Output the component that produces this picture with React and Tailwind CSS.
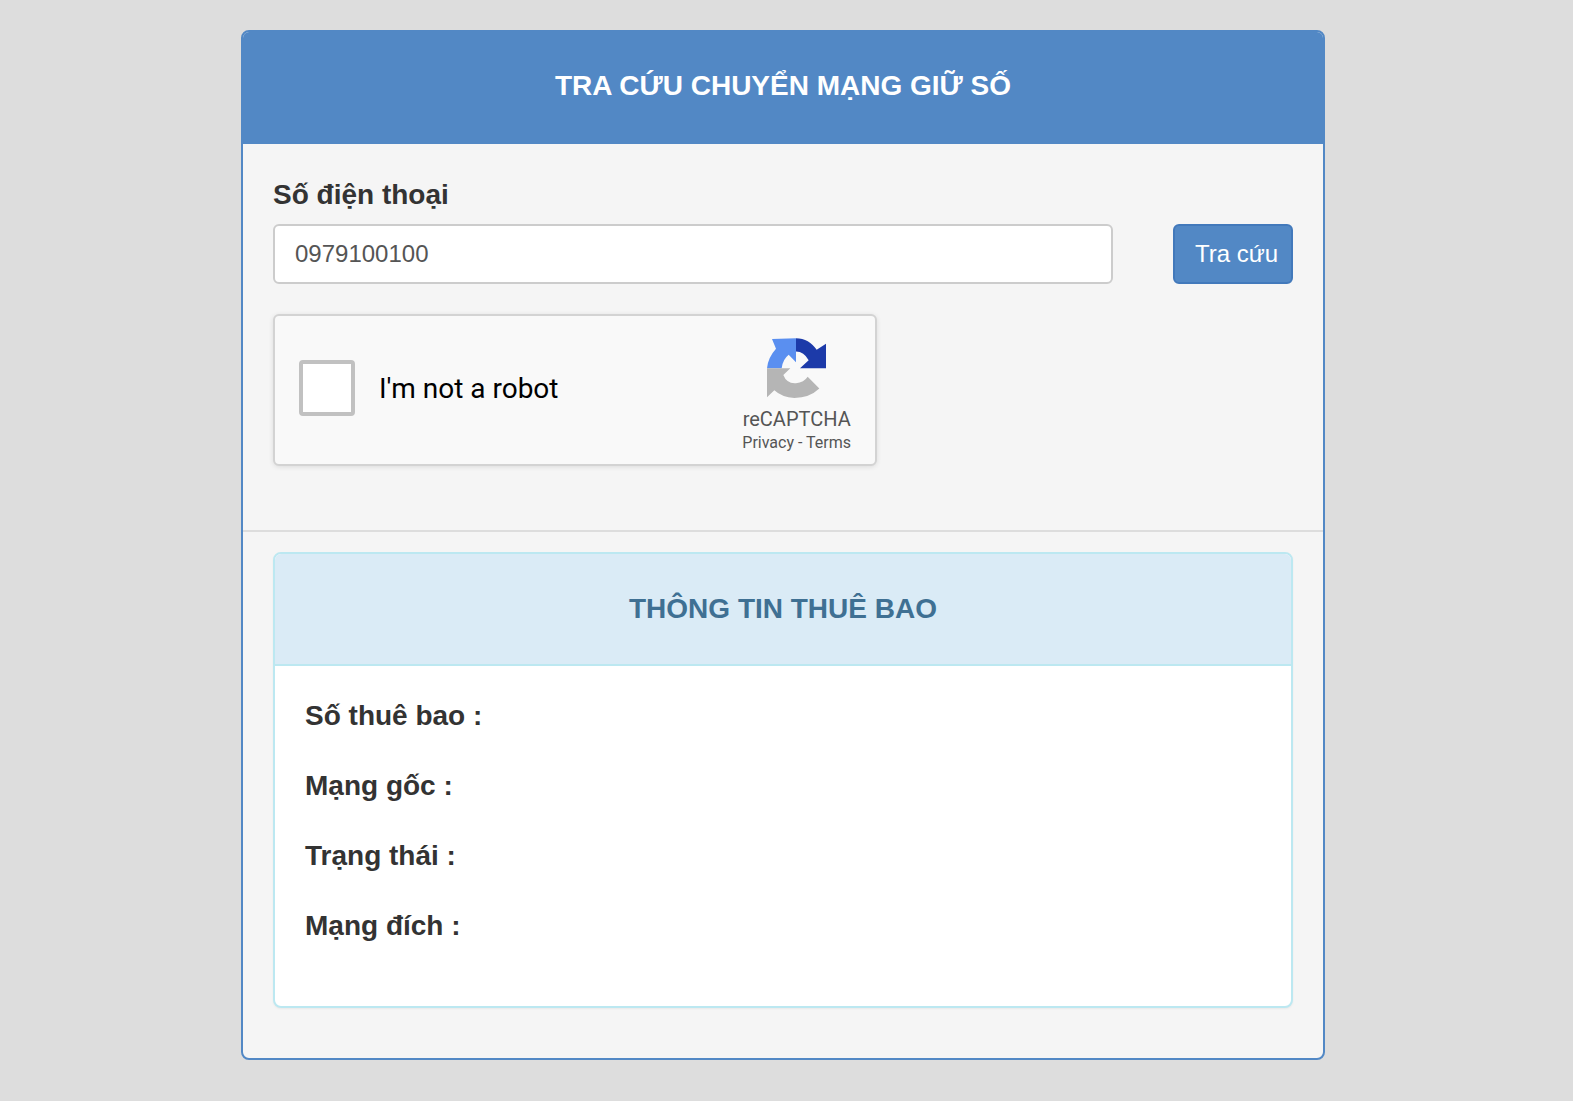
import React from "react";

const rows = ["Số thuê bao :", "Mạng gốc :", "Trạng thái :", "Mạng đích :"];

function RecaptchaLogo() {
  return (
    <svg
      viewBox="113 40 177 178"
      preserveAspectRatio="none"
      className="w-[59px] h-[60px]"
    >
      <path
        d="M200 41C226 41 248 54 262 75L290 57V130H212L238 106Q224 80 200 80Z"
        fill="#1c3aa9"
      />
      <path
        d="M113 130Q116 98 140 72L128 43L200 41V112L178 90Q160 104 157 130Z"
        fill="#5a8ff0"
      />
      <path
        d="M113 130H183L162 150Q172 176 200 174Q224 172 235 155L270 190Q240 218 195 218Q158 216 135 195L113 216Z"
        fill="#b5b5b5"
      />
    </svg>
  );
}

export default function App() {
  return (
    <div className="min-h-screen bg-[#dddddd] pt-[30px] pb-[41px] font-['Liberation_Sans',Arial,sans-serif] text-[#333333]">
      <div className="ml-[241px] w-[1084px] rounded-[8px] border-2 border-[#5288c5] bg-[#f5f5f5] overflow-hidden">
        {/* Header */}
        <div className="h-[112px] pb-[4px] bg-[#5288c5] flex items-center justify-center">
          <h1 className="text-[28px] font-bold text-white">
            TRA CỨU CHUYỂN MẠNG GIỮ SỐ
          </h1>
        </div>

        {/* Form */}
        <div className="px-[30px] pt-[31px] pb-[64px] border-b-2 border-[#dddddd]">
          <label className="block text-[28px] leading-[40px] font-bold mb-[9px]">
            Số điện thoại
          </label>
          <div className="flex justify-between">
            <div className="w-[840px] h-[60px] rounded-[6px] border-2 border-[#cccccc] bg-white pl-[20px] flex items-center text-[24px] text-[#555555]">
              0979100100
            </div>
            <button className="w-[120px] h-[60px] rounded-[6px] border-2 border-[#4279bb] bg-[#5288c5] pl-[20px] text-left text-[24px] text-white">
              Tra cứu
            </button>
          </div>

          {/* Captcha */}
          <div className="mt-[30px] w-[604px] h-[152px] rounded-[6px] border-2 border-[#d3d3d3] bg-[#f9f9f9] shadow-[0_1px_5px_rgba(0,0,0,0.1)] flex justify-between pl-[24px] pr-[24px] font-['Roboto',sans-serif]">
            <div className="flex items-center pb-[4px]">
              <div className="w-[56px] h-[56px] rounded-[4px] border-4 border-[#c1c1c1] bg-white"></div>
              <span className="ml-[24px] pt-[2px] text-[28px] text-black">
                I'm not a robot
              </span>
            </div>
            <div className="flex flex-col items-center self-start mt-[22px]">
              <RecaptchaLogo />
              <div className="mt-[7px] text-[20px] leading-[28px] text-[#555555]">
                reCAPTCHA
              </div>
              <div className="text-[16px] leading-[20px] text-[#555555]">
                Privacy - Terms
              </div>
            </div>
          </div>
        </div>

        {/* Result */}
        <div className="mx-[30px] mt-[20px] mb-[50px] rounded-[8px] border-2 border-[#bce8f1] bg-white overflow-hidden shadow-[0_1px_2px_rgba(0,0,0,0.05)]">
          <div className="h-[112px] bg-[#daebf6] border-b-2 border-[#bce8f1] flex items-center justify-center">
            <h2 className="text-[28px] font-bold text-[#3f7093]">
              THÔNG TIN THUÊ BAO
            </h2>
          </div>
          <div className="px-[30px] pt-[30px] pb-[30px]">
            {rows.map((row) => (
              <p key={row} className="text-[28px] leading-[40px] font-bold mb-[30px]">
                {row}
              </p>
            ))}
          </div>
        </div>
      </div>
    </div>
  );
}
